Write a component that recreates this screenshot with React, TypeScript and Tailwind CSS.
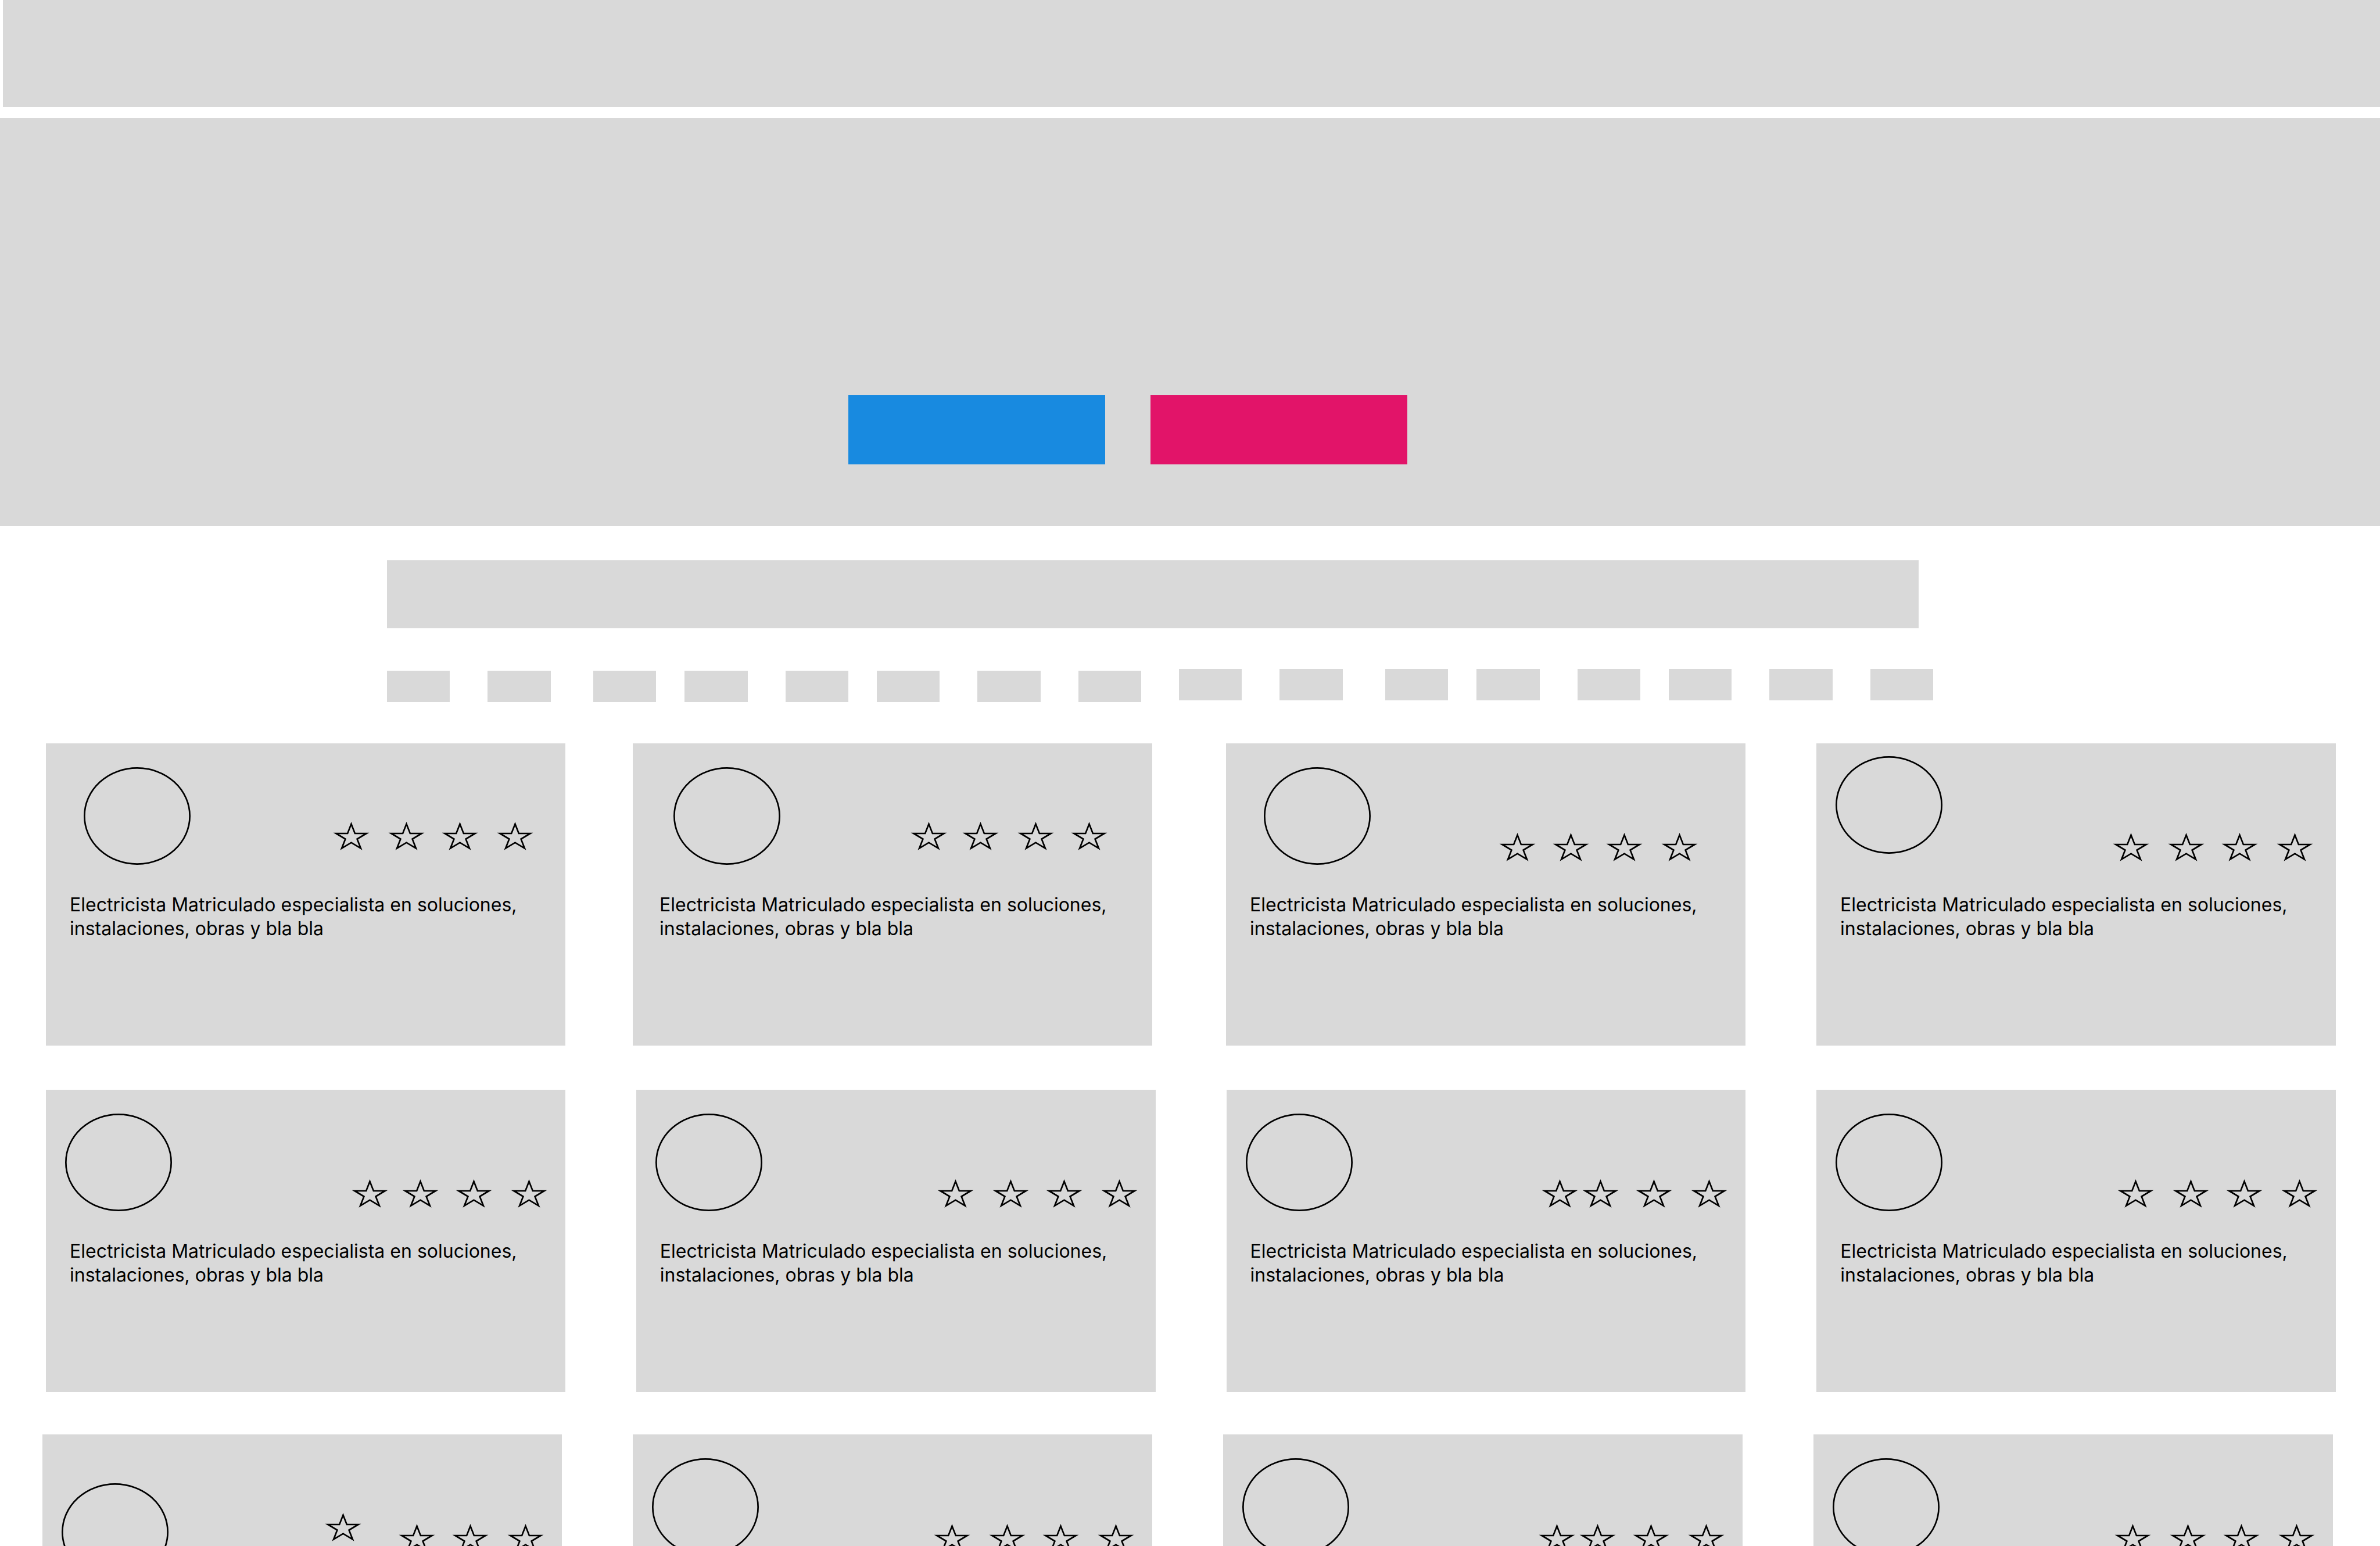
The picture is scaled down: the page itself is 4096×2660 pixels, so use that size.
const DESCRIPTION =
  "Electricista Matriculado especialista en soluciones, instalaciones, obras y bla bla";

type CardData = {
  name: string;
  card: string;
  avatar: string;
  rating: string;
  stars: string[];
  text: string;
};

const STARS_EVEN = ["", "ml-[30px]", "ml-[27px]", "ml-[30px]"];
const STARS_PAIRED = ["", "ml-[5px]", "ml-[27px]", "ml-[30px]"];

const FIRST_ROW: CardData[] = [
  {
    name: "Profesional 1",
    card: "",
    avatar: "ml-[65px] mt-[41px]",
    rating: "mr-[54px] mt-[135px]",
    stars: STARS_EVEN,
    text: "ml-[41px]",
  },
  {
    name: "Profesional 2",
    card: "ml-[116px]",
    avatar: "ml-[70px] mt-[41px]",
    rating: "mr-[76px] mt-[135px]",
    stars: ["", "ml-[24px]", "ml-[30px]", "ml-[27px]"],
    text: "ml-[46px]",
  },
  {
    name: "Profesional 3",
    card: "ml-[127px]",
    avatar: "ml-[65px] mt-[41px]",
    rating: "mr-[81px] mt-[154px]",
    stars: ["", "ml-[27px]", "ml-[27px]", "ml-[30px]"],
    text: "ml-[41px]",
  },
  {
    name: "Profesional 4",
    card: "ml-[122px]",
    avatar: "ml-[33px] mt-[22px]",
    rating: "mr-[38px] mt-[154px]",
    stars: STARS_EVEN,
    text: "ml-[41px]",
  },
];

const regular = (name: string, card: string, stars: string[]): CardData => ({
  name,
  card,
  avatar: "ml-[33px] mt-[41px]",
  rating: "mr-[30px] mt-[154px]",
  stars,
  text: "ml-[41px]",
});

const SECOND_ROW: CardData[] = [
  regular("Profesional 5", "", ["", "ml-[22px]", "ml-[27px]", "ml-[30px]"]),
  regular("Profesional 6", "ml-[122px]", STARS_EVEN),
  regular("Profesional 7", "ml-[122px]", STARS_PAIRED),
  regular("Profesional 8", "ml-[122px]", STARS_EVEN),
];

const THIRD_ROW: CardData[] = [
  {
    ...regular("Profesional 9", "", ["-mt-[19px]", "ml-[62px]", "ml-[27px]", "ml-[30px]"]),
    avatar: "ml-[33px] mt-[84px]",
  },
  regular("Profesional 10", "ml-[122px]", STARS_EVEN),
  regular("Profesional 11", "ml-[122px]", STARS_PAIRED),
  regular("Profesional 12", "ml-[122px]", STARS_EVEN),
];

const CHIP_GAPS = [
  "",
  "ml-[65px]",
  "ml-[73px]",
  "ml-[49px]",
  "ml-[65px]",
  "ml-[49px]",
  "ml-[65px]",
  "ml-[65px]",
];

const STAR_POINTS =
  "12,0 14.694,6.91 23.413,6.91 16.36,11.18 19.053,18.09 12,13.82 4.947,18.09 7.64,11.18 0.587,6.91 9.306,6.91";

function Star({ className }: { className: string }) {
  return (
    <svg
      viewBox="0 0 24 20"
      preserveAspectRatio="none"
      className={`h-[54px] w-[65px] shrink-0 ${className}`}
      aria-hidden="true"
    >
      {/* The clip keeps only the inner half of the stroke. */}
      <polygon
        points={STAR_POINTS}
        clipPath="url(#star-shape)"
        fill="none"
        stroke="black"
        strokeWidth="2"
        strokeMiterlimit="10"
      />
    </svg>
  );
}

function Avatar({ className }: { className: string }) {
  return (
    <svg
      viewBox="0 0 68 62"
      preserveAspectRatio="none"
      className={`h-[168px] w-[184px] shrink-0 ${className}`}
      aria-hidden="true"
    >
      <ellipse cx="34" cy="31" rx="33.5" ry="30.5" fill="none" stroke="black" />
    </svg>
  );
}

function Card({ data, withText }: { data: CardData; withText: boolean }) {
  return (
    <article
      aria-label={data.name}
      className={`min-h-[520px] min-w-0 flex-1 bg-[#D9D9D9] ${data.card}`}
    >
      <div className="flex h-[257px] items-start justify-between">
        <Avatar className={data.avatar} />
        <div role="img" aria-label="4 estrellas" className={`flex items-start ${data.rating}`}>
          {data.stars.map((gap, i) => (
            <Star key={i} className={gap} />
          ))}
        </div>
      </div>
      {withText && (
        <p className={`max-w-[800px] text-[32px] leading-[41px] ${data.text}`}>{DESCRIPTION}</p>
      )}
    </article>
  );
}

function CardRow({
  cards,
  className,
  withText = true,
}: {
  cards: CardData[];
  className: string;
  withText?: boolean;
}) {
  return (
    <div className={`flex ${className}`}>
      {cards.map((data) => (
        <Card key={data.name} data={data} withText={withText} />
      ))}
    </div>
  );
}

function ChipGroup({ first, className }: { first: number; className: string }) {
  return (
    <div className={`flex flex-1 ${className}`}>
      {CHIP_GAPS.map((gap, i) => (
        <button
          key={i}
          type="button"
          aria-label={`Categoría ${first + i}`}
          className={`h-[54px] flex-1 bg-[#D9D9D9] ${gap}`}
        />
      ))}
    </div>
  );
}

export default function App() {
  return (
    <div className="h-screen overflow-hidden bg-white font-['Inter',sans-serif] text-black">
      <svg className="absolute size-0" aria-hidden="true">
        <clipPath id="star-shape">
          <polygon points={STAR_POINTS} />
        </clipPath>
      </svg>

      <header className="ml-[5px] h-[184px] bg-[#D9D9D9]" />

      <main>
        <section
          aria-label="Portada"
          className="mt-[19px] flex h-[702px] justify-center gap-[78px] bg-[#D9D9D9] pt-[477px] pr-[214px]"
        >
          <button
            type="button"
            aria-label="Buscar profesional"
            className="h-[119px] w-[442px] bg-[#188AE0]"
          />
          <button
            type="button"
            aria-label="Ofrecer servicios"
            className="h-[119px] w-[442px] bg-[#E21469]"
          />
        </section>

        <div className="mt-[59px] mr-[794px] ml-[666px] flex">
          <input
            type="search"
            aria-label="Buscar"
            className="h-[117px] min-w-0 flex-1 appearance-none bg-[#D9D9D9] px-8 text-[32px] outline-none"
          />
        </div>

        <nav aria-label="Categorías" className="mt-[70px] mr-[769px] ml-[666px] flex gap-[65px]">
          <ChipGroup first={1} className="pt-[3px]" />
          <ChipGroup first={9} className="" />
        </nav>

        <section aria-label="Profesionales" className="mt-[71px]">
          <CardRow cards={FIRST_ROW} className="mr-[76px] ml-[79px]" />
          <CardRow cards={SECOND_ROW} className="mt-[76px] mr-[76px] ml-[79px]" />
          <CardRow cards={THIRD_ROW} className="mt-[73px] mr-[81px] ml-[73px]" withText={false} />
        </section>
      </main>
    </div>
  );
}
